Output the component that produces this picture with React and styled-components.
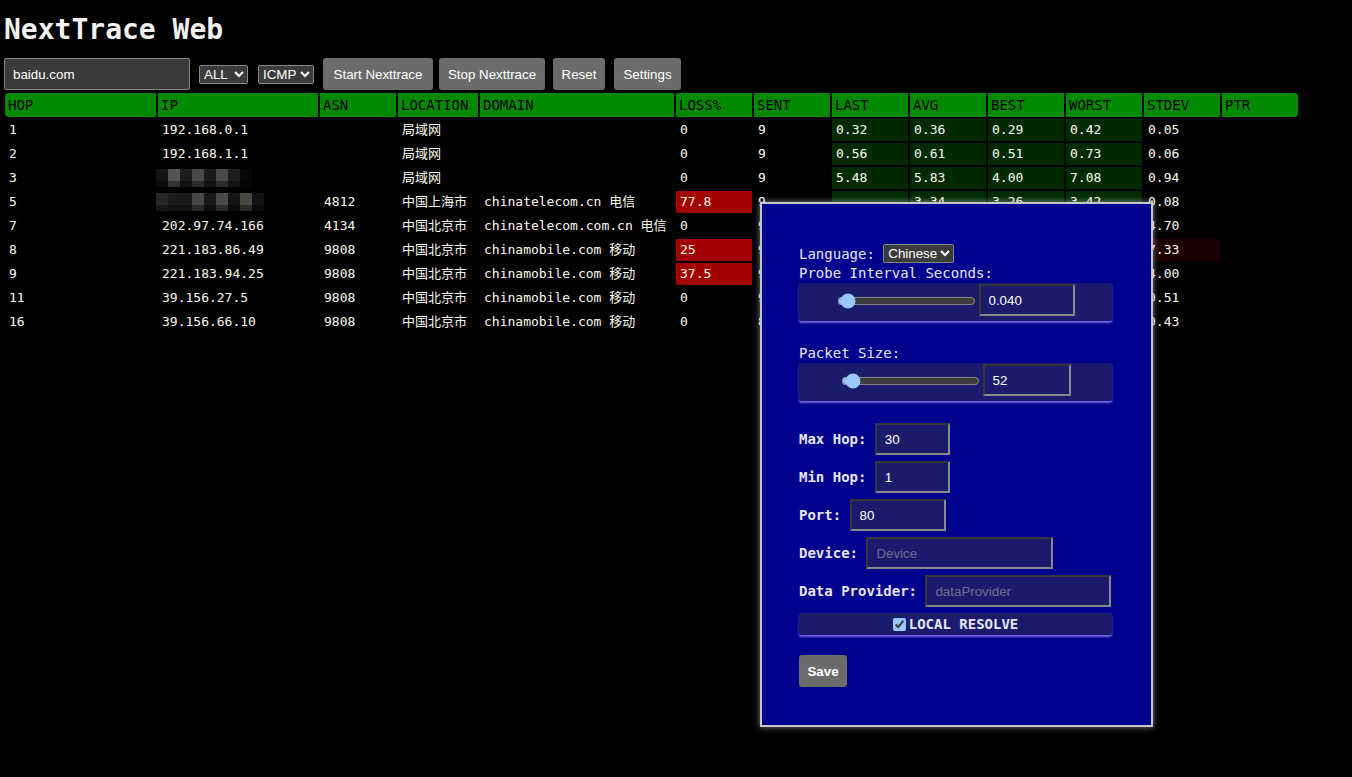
import React from 'react'
import styled, { createGlobalStyle } from 'styled-components'

const GlobalStyle = createGlobalStyle`
:root {
  color-scheme: dark;
}
body {
  margin: 0;
  background: #000;
  color: #fff;
  font-family: "DejaVu Sans Mono", "Noto Sans CJK SC", monospace;
}
input, select, button {
  font-family: "Liberation Sans", Arial, sans-serif;
  font-size: 13.33px;
}
`

const Page = styled.div`
position: relative;
display: flow-root;
padding: 0 0 0 4px;
min-height: 777px;
`

const Title = styled.h1`
margin: 14px 0 12px;
font-size: 28px;
line-height: 32px;
font-weight: bold;
color: #f2f2f2;
`

const Controls = styled.div`
display: flex;
align-items: center;
height: 32px;
margin-bottom: 3px;
`

const Host = styled.input`
box-sizing: border-box;
width: 186px;
height: 32px;
padding: 0 8px;
background: #3b3b3b;
border: 1px solid #858585;
border-radius: 2px;
color: #fff;
`

const Picker = styled.select`
margin-left: ${p => p.$ml || 0}px;
color: #fff;
`

const Button = styled.button`
box-sizing: border-box;
margin-left: ${p => p.$ml || 0}px;
width: ${p => p.$w}px;
height: 32px;
padding: 0;
background: #6b6b6b;
border: none;
border-radius: 3px;
color: #fff;
`

const Grid = styled.div`
display: grid;
grid-template-columns: 151px 160px 76px 80px 194px repeat(8, 76px);
gap: 2px;
margin-left: 1px;
width: max-content;
`

const Head = styled.div`
height: 24px;
line-height: 24px;
padding-left: 3px;
background: #008a00;
color: #000;
font-size: 14px;
border-radius: ${p => (p.$first ? '4px 0 0 4px' : p.$last ? '0 4px 4px 0' : '0')};
`

const tones = {
  lat: '#002b00',
  loss: '#a30000',
  warn: '#1c0000',
}

const Cell = styled.div`
height: 22px;
line-height: 22px;
padding-left: 4px;
font-size: 13px;
white-space: nowrap;
overflow: visible;
background: ${p => tones[p.$tone] || 'transparent'};
color: #fffbee;
`

const Blur = styled.svg`
display: block;
margin: 2px 0 0 -6px;
`

const Modal = styled.div`
position: absolute;
left: 760px;
top: 202px;
box-sizing: border-box;
width: 393px;
height: 525px;
padding: 39px 37px 0;
background: #00008e;
border: 2px solid #c4c4cc;
box-shadow: 0 0 6px rgba(190, 190, 190, 0.7);
display: flex;
flex-direction: column;
color: #e6e6f2;
font-size: 14px;
`

const LangRow = styled.div`
height: 21px;
display: flex;
align-items: center;
white-space: pre;
`

const Caption = styled.div`
line-height: 19px;
margin-top: ${p => p.$mt || 0}px;
white-space: pre;
`

const SliderBox = styled.div`
box-sizing: border-box;
height: 38px;
width: 313px;
padding-top: 1px;
display: flex;
justify-content: center;
align-items: flex-start;
gap: 3px;
background: #1b1b6e;
border-radius: 2px;
box-shadow: 0 2px 2px #7464e0;
`

const Range = styled.input`
width: 139px;
margin: 9px 0 0;
`

const Field = styled.input`
box-sizing: border-box;
width: ${p => p.$w}px;
height: 32px;
padding: 0 8px;
background: #1b1b6e;
border: 2px inset #8a8a8a;
color: #fff;
&::placeholder {
  color: #6e6e8a;
}
`

const FieldRow = styled.label`
display: flex;
align-items: center;
height: 32px;
margin-top: ${p => p.$mt ?? 6}px;
font-weight: bold;
white-space: pre;
`

const Resolve = styled.label`
box-sizing: border-box;
margin-top: 6px;
height: 22px;
width: 313px;
display: flex;
justify-content: center;
align-items: center;
gap: 3px;
background: #1b1b6e;
border-radius: 2px;
box-shadow: 0 2px 2px #7464e0;
font-weight: bold;
input {
  margin: 0;
  width: 13px;
  height: 13px;
}
`

const Save = styled.button`
margin-top: 20px;
width: 48px;
height: 32px;
padding: 0;
background: #6b6b6b;
border: none;
border-radius: 3px;
color: #fff;
font-weight: bold;
`

const columns = ['HOP', 'IP', 'ASN', 'LOCATION', 'DOMAIN', 'LOSS%', 'SENT', 'LAST', 'AVG', 'BEST', 'WORST', 'STDEV', 'PTR']

const mosaicA = ['#141414', '#555', '#1b1e20', '#4a4a4a', '#1a1c1f', '#4b4b4b', '#1e1e1e', '#080808']
const mosaicB = ['#262626', '#1d1d1d', '#1a1c1d', '#474747', '#15171a', '#4a4a4a', '#121418', '#4a4640', '#101217']

const Mosaic = ({ shades }) => (
  <Blur width={shades.length * 12} height={18}>
    {shades.map((c, i) => (
      <g key={i}>
        <rect x={i * 12} y={0} width={12} height={12} fill={c} />
        <rect x={i * 12} y={12} width={12} height={6} fill={c} opacity={0.6} />
      </g>
    ))}
  </Blur>
)

const rows = [
  ['1', '192.168.0.1', '', '局域网', '', '0', '9', '0.32', '0.36', '0.29', '0.42', '0.05', ''],
  ['2', '192.168.1.1', '', '局域网', '', '0', '9', '0.56', '0.61', '0.51', '0.73', '0.06', ''],
  ['3', mosaicA, '', '局域网', '', '0', '9', '5.48', '5.83', '4.00', '7.08', '0.94', ''],
  ['5', mosaicB, '4812', '中国上海市', 'chinatelecom.cn 电信', '77.8', '9', '-', '3.34', '3.26', '3.42', '0.08', ''],
  ['7', '202.97.74.166', '4134', '中国北京市', 'chinatelecom.com.cn 电信', '0', '9', '6.12', '8.15', '6.02', '14.9', '4.70', ''],
  ['8', '221.183.86.49', '9808', '中国北京市', 'chinamobile.com 移动', '25', '9', '9.88', '14.2', '7.41', '27.6', '7.33', ''],
  ['9', '221.183.94.25', '9808', '中国北京市', 'chinamobile.com 移动', '37.5', '9', '8.02', '12.5', '7.20', '21.3', '4.00', ''],
  ['11', '39.156.27.5', '9808', '中国北京市', 'chinamobile.com 移动', '0', '9', '7.95', '8.31', '7.62', '9.14', '0.51', ''],
  ['16', '39.156.66.10', '9808', '中国北京市', 'chinamobile.com 移动', '0', '8', '7.71', '8.02', '7.44', '8.90', '0.43', ''],
]

const toneFor = (row, i) => {
  if (i === 5 && row[5] !== '0') return 'loss'
  if (i >= 7 && i <= 10) return 'lat'
  if (i === 11 && row[0] === '8') return 'warn'
  return null
}

const App = () => {
  return (
    <Page>
      <GlobalStyle />
      <Title>NextTrace Web</Title>
      <Controls>
        <Host defaultValue="baidu.com" />
        <Picker $ml={9} defaultValue="ALL">
          <option>ALL</option>
          <option>IPv4</option>
          <option>IPv6</option>
        </Picker>
        <Picker $ml={10} defaultValue="ICMP">
          <option>ICMP</option>
          <option>TCP</option>
          <option>UDP</option>
        </Picker>
        <Button $ml={9} $w={110}>Start Nexttrace</Button>
        <Button $ml={6} $w={106}>Stop Nexttrace</Button>
        <Button $ml={8} $w={52}>Reset</Button>
        <Button $ml={9} $w={67}>Settings</Button>
      </Controls>

      <Grid>
        {columns.map((c, i) => (
          <Head key={c} $first={i === 0} $last={i === columns.length - 1}>{c}</Head>
        ))}
        {rows.map(row =>
          row.map((v, i) => (
            <Cell key={row[0] + '-' + i} $tone={toneFor(row, i)}>
              {Array.isArray(v) ? <Mosaic shades={v} /> : v}
            </Cell>
          ))
        )}
      </Grid>

      <Modal>
        <LangRow>
          {'Language: '}
          <select defaultValue="Chinese">
            <option>Chinese</option>
            <option>English</option>
          </select>
        </LangRow>
        <Caption>Probe Interval Seconds:</Caption>
        <SliderBox>
          <Range type="range" min={0.01} max={1} step={0.01} defaultValue={0.04} />
          <Field $w={96} defaultValue="0.040" />
        </SliderBox>
        <Caption $mt={23}>Packet Size:</Caption>
        <SliderBox>
          <Range type="range" min={0} max={1500} defaultValue={52} />
          <Field $w={88} defaultValue="52" />
        </SliderBox>
        <FieldRow $mt={22}>{'Max Hop: '}<Field $w={75} defaultValue="30" /></FieldRow>
        <FieldRow>{'Min Hop: '}<Field $w={75} defaultValue="1" /></FieldRow>
        <FieldRow>{'Port: '}<Field $w={96} defaultValue="80" /></FieldRow>
        <FieldRow>{'Device: '}<Field $w={187} placeholder="Device" /></FieldRow>
        <FieldRow>{'Data Provider: '}<Field $w={186} placeholder="dataProvider" /></FieldRow>
        <Resolve>
          <input type="checkbox" defaultChecked />
          LOCAL RESOLVE
        </Resolve>
        <Save>Save</Save>
      </Modal>
    </Page>
  )
}

export default App
